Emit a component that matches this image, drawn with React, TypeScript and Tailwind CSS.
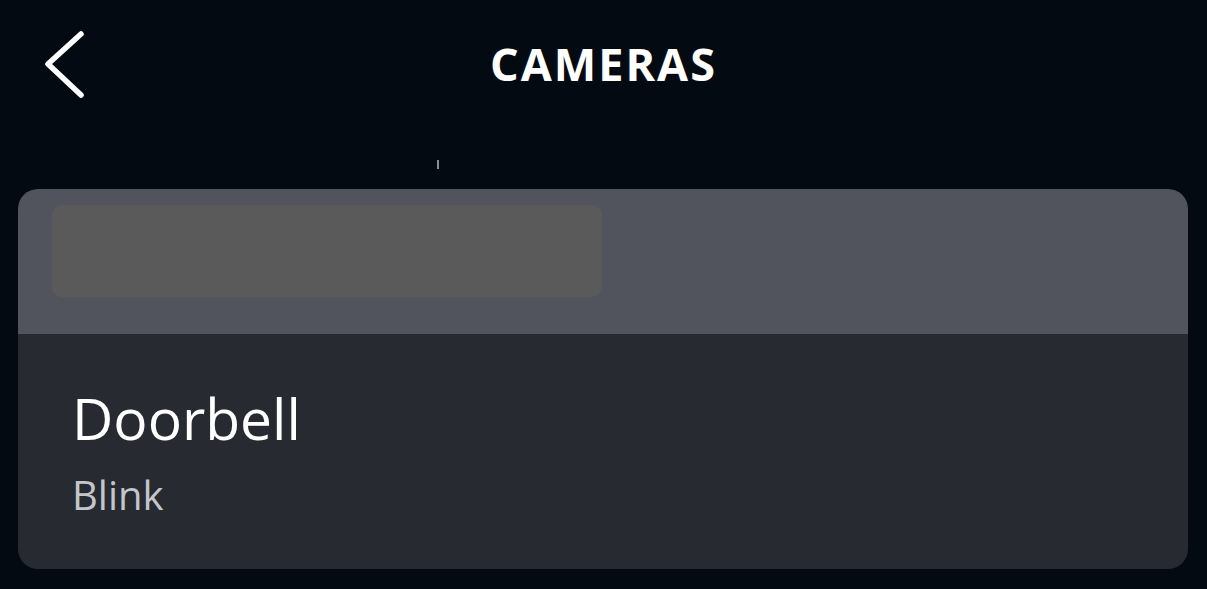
import React from "react";

function BackChevron() {
  return (
    <svg width="48" height="74" viewBox="0 0 48 74" fill="none">
      <path d="M39 7 L6 37 L39 68" stroke="#ffffff" strokeWidth="5.5" strokeLinecap="round" strokeLinejoin="round" />
    </svg>
  );
}

export default function App() {
  return (
    <div className="w-[1207px] h-[589px] bg-[#040a12] flex flex-col overflow-hidden" style={{ fontFamily: '"Open Sans", "Noto Sans", sans-serif' }}>
      <header className="h-[127px] grid grid-cols-[1fr_auto_1fr] items-center">
        <div className="pl-[42px] flex items-center">
          <BackChevron />
        </div>
        <h1 className="text-[45px] leading-none font-bold tracking-[2px] text-white">CAMERAS</h1>
        <div />
      </header>

      <div className="relative h-[62px]">
        <span className="absolute left-[437px] top-[33px] w-[2px] h-[9px] bg-[#8a8d92]" />
      </div>

      <div className="mx-[18px] w-[1170px] rounded-[20px] overflow-hidden">
        <div className="h-[145px] bg-[#51545c] pt-[16px] pl-[34px]">
          <div className="w-[550px] h-[92px] rounded-[10px] bg-[#5a5a5a]" />
        </div>
        <div className="h-[235px] bg-[#272a31] pl-[54px] pt-[56px]">
          <p className="text-[57px] leading-none text-white">Doorbell</p>
          <p className="mt-[28px] text-[40px] leading-none text-[#c3c6cb]">Blink</p>
        </div>
      </div>
    </div>
  );
}
